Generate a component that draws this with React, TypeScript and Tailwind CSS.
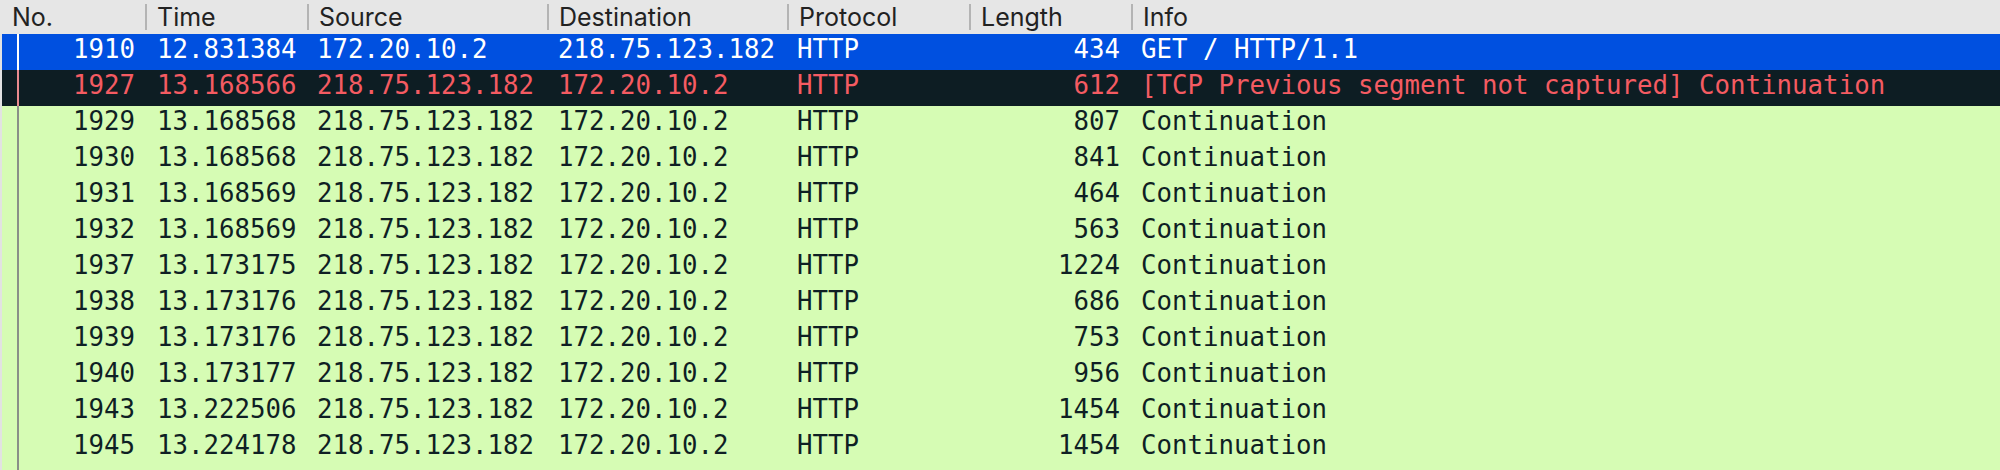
import React from "react";

type Packet = {
  no: number;
  time: string;
  src: string;
  dst: string;
  proto: string;
  len: number;
  info: string;
  kind: "selected" | "bad" | "http";
};

const packets: Packet[] = [
  { no: 1910, time: "12.831384", src: "172.20.10.2", dst: "218.75.123.182", proto: "HTTP", len: 434, info: "GET / HTTP/1.1", kind: "selected" },
  { no: 1927, time: "13.168566", src: "218.75.123.182", dst: "172.20.10.2", proto: "HTTP", len: 612, info: "[TCP Previous segment not captured] Continuation", kind: "bad" },
  { no: 1929, time: "13.168568", src: "218.75.123.182", dst: "172.20.10.2", proto: "HTTP", len: 807, info: "Continuation", kind: "http" },
  { no: 1930, time: "13.168568", src: "218.75.123.182", dst: "172.20.10.2", proto: "HTTP", len: 841, info: "Continuation", kind: "http" },
  { no: 1931, time: "13.168569", src: "218.75.123.182", dst: "172.20.10.2", proto: "HTTP", len: 464, info: "Continuation", kind: "http" },
  { no: 1932, time: "13.168569", src: "218.75.123.182", dst: "172.20.10.2", proto: "HTTP", len: 563, info: "Continuation", kind: "http" },
  { no: 1937, time: "13.173175", src: "218.75.123.182", dst: "172.20.10.2", proto: "HTTP", len: 1224, info: "Continuation", kind: "http" },
  { no: 1938, time: "13.173176", src: "218.75.123.182", dst: "172.20.10.2", proto: "HTTP", len: 686, info: "Continuation", kind: "http" },
  { no: 1939, time: "13.173176", src: "218.75.123.182", dst: "172.20.10.2", proto: "HTTP", len: 753, info: "Continuation", kind: "http" },
  { no: 1940, time: "13.173177", src: "218.75.123.182", dst: "172.20.10.2", proto: "HTTP", len: 956, info: "Continuation", kind: "http" },
  { no: 1943, time: "13.222506", src: "218.75.123.182", dst: "172.20.10.2", proto: "HTTP", len: 1454, info: "Continuation", kind: "http" },
  { no: 1945, time: "13.224178", src: "218.75.123.182", dst: "172.20.10.2", proto: "HTTP", len: 1454, info: "Continuation", kind: "http" },
];

const rowStyle = {
  selected: { row: "bg-[#0050e0] text-white", line: "bg-white" },
  bad: { row: "bg-[#0d1d23] text-[#f45b62]", line: "bg-[#e98a8e]" },
  http: { row: "bg-[#d6fcb4] text-[#0f1f24]", line: "bg-[#8a8f88]" },
};

function HeaderCell({ label, className }: { label: string; className: string }) {
  return (
    <div className={`flex items-center h-full ${className}`}>
      <div className="w-[2px] h-[26px] bg-[#b4b4b4] shrink-0" />
      <span className="pl-[10px]">{label}</span>
    </div>
  );
}

function Row({ p }: { p: Packet }) {
  const s = rowStyle[p.kind];
  return (
    <div className={`flex h-[36px] leading-[30px] whitespace-pre ${s.row}`}>
      <div className="relative w-[143px] shrink-0 text-right pr-[10px]">
        <div className={`absolute left-[15px] top-0 bottom-0 w-[2px] ${s.line}`} />
        {p.no}
      </div>
      <div className="w-[162px] shrink-0 pl-[12px]">{p.time}</div>
      <div className="w-[240px] shrink-0 pl-[10px]">{p.src}</div>
      <div className="w-[240px] shrink-0 pl-[11px]">{p.dst}</div>
      <div className="w-[182px] shrink-0 pl-[10px]">{p.proto}</div>
      <div className="w-[162px] shrink-0 text-right pr-[11px]">{p.len}</div>
      <div className="flex-1 pl-[10px]">{p.info}</div>
    </div>
  );
}

export default function App() {
  return (
    <div className="w-[2000px] h-[470px] flex flex-col overflow-hidden bg-[#d6fcb4]">
      <div className="flex h-[34px] shrink-0 bg-[#e6e6e6] text-[#222222] text-[25px] leading-[34px] font-['Inter',sans-serif]">
        <div className="w-[145px] shrink-0 pl-[12px]">No.</div>
        <HeaderCell label="Time" className="w-[162px] shrink-0" />
        <HeaderCell label="Source" className="w-[240px] shrink-0" />
        <HeaderCell label="Destination" className="w-[240px] shrink-0" />
        <HeaderCell label="Protocol" className="w-[182px] shrink-0" />
        <HeaderCell label="Length" className="w-[162px] shrink-0" />
        <HeaderCell label="Info" className="flex-1" />
      </div>
      <div className="flex flex-col flex-1 border-l-2 border-[#e2e2e2] font-['DejaVu_Sans_Mono',monospace] text-[25.75px]">
        {packets.map((p) => (
          <Row key={p.no} p={p} />
        ))}
        <div className="relative flex-1">
          <div className="absolute left-[15px] top-0 bottom-0 w-[2px] bg-[#8a8f88]" />
        </div>
      </div>
    </div>
  );
}
